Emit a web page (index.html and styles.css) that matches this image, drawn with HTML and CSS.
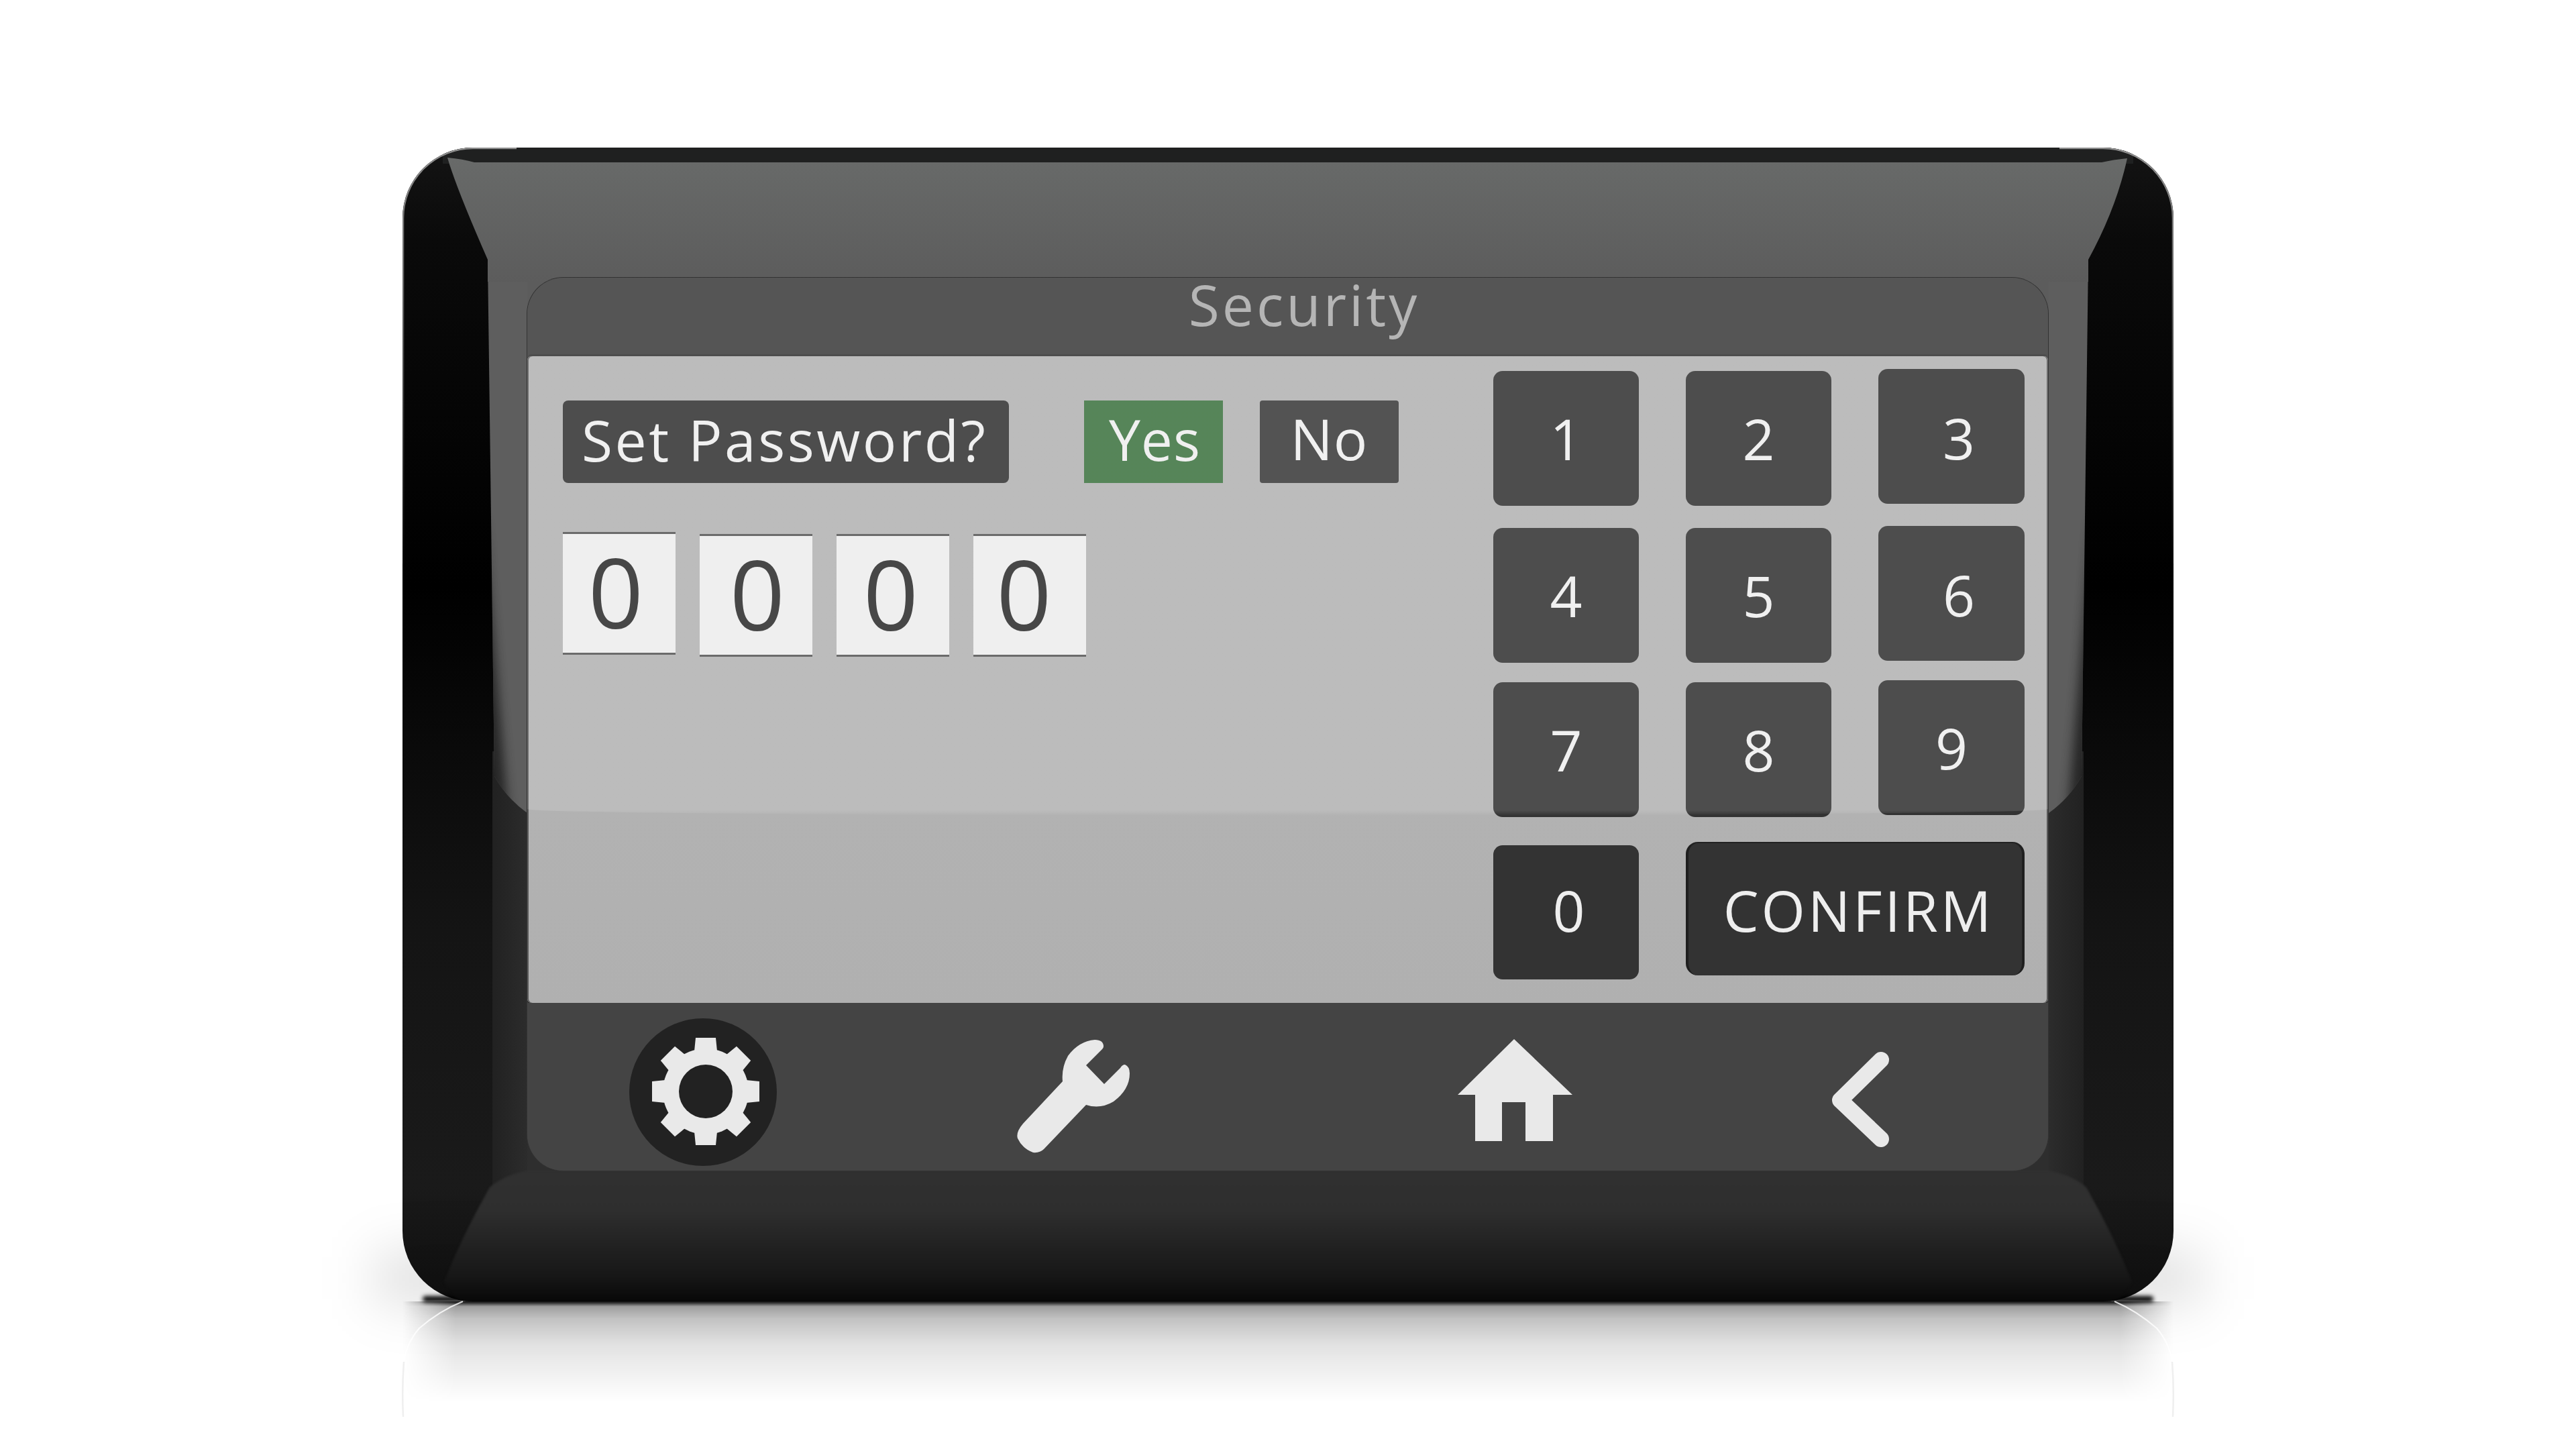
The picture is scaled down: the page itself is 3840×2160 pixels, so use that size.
FILE: index.html
```html
<!DOCTYPE html>
<html lang="en">
<head>
    <meta charset="UTF-8">
    <title>Security</title>
    <link rel="stylesheet" href="styles.css">
</head>
<body>
    <div class="device">
        <div class="floor-glow"></div>
        <div class="floor-shadow"></div>
        <div class="floor-contact"></div>
        <svg class="reflection" viewBox="0 0 2640 200">
            <path d="M90 0Q55 14 25 40Q6 62 2 90" class="reflection-line"/>
            <path d="M2 90Q-1 130 1 172" class="reflection-faint"/>
            <path d="M2552 0Q2585 14 2615 40Q2634 62 2638 90" class="reflection-line"/>
            <path d="M2638 90Q2641 130 2639 172" class="reflection-faint"/>
        </svg>

        <!-- Bezel faces -->
        <svg class="bezel" viewBox="0 0 2640 1720">
            <defs>
                <linearGradient id="topFace" x1="0" y1="0" x2="0" y2="1">
                    <stop offset="0" stop-color="#686a69"/>
                    <stop offset="1" stop-color="#5c5c5c"/>
                </linearGradient>
                <linearGradient id="lowLeft" x1="0" y1="0" x2="1" y2="0">
                    <stop offset="0" stop-color="#212121"/>
                    <stop offset="1" stop-color="#2c2c2c"/>
                </linearGradient>
                <linearGradient id="lowRight" x1="1" y1="0" x2="0" y2="0">
                    <stop offset="0" stop-color="#212121"/>
                    <stop offset="1" stop-color="#2c2c2c"/>
                </linearGradient>
                <linearGradient id="bottomFace" x1="0" y1="0" x2="0" y2="1">
                    <stop offset="0" stop-color="#303030"/>
                    <stop offset="0.3" stop-color="#2e2e2e"/>
                    <stop offset="0.8" stop-color="#171717"/>
                    <stop offset="1" stop-color="#080808"/>
                </linearGradient>
                <linearGradient id="edgeFade" gradientUnits="userSpaceOnUse" x1="0" y1="0" x2="0" y2="620">
                    <stop offset="0" stop-color="#909090"/>
                    <stop offset="1" stop-color="#0a0a0a"/>
                </linearGradient>
                <clipPath id="stripLeft">
                    <path d="M127 167L137 937Q155 970 186 992V167Z"/>
                </clipPath>
                <clipPath id="stripRight">
                    <path d="M2513 167L2503 937Q2485 970 2454 992V167Z"/>
                </clipPath>
            </defs>
            <rect x="60" y="0" width="2520" height="24" fill="#1f2020"/>
            <rect x="180" y="190" width="2280" height="80" fill="#5c5c5c"/>
            <rect x="180" y="1450" width="2280" height="80" fill="#2e2e2e"/>
            <path d="M134 900V1560H186V900Z" fill="url(#lowLeft)"/>
            <path d="M2506 900V1560H2454V900Z" fill="url(#lowRight)"/>
            <path d="M127 167L137 937Q155 970 186 992V167Z" fill="#5e5e5e"/>
            <path d="M2513 167L2503 937Q2485 970 2454 992V167Z" fill="#5e5e5e"/>
            <g clip-path="url(#stripLeft)">
                <path d="M120 540L158 1000H120Z" class="strip-fade"/>
            </g>
            <g clip-path="url(#stripRight)">
                <path d="M2520 540L2482 1000H2520Z" class="strip-fade"/>
            </g>
            <path d="M67 15Q90 17 107 22H2533Q2550 18 2571 16Q2555 90 2513 167V200H127V167Q80 60 67 15Z" fill="url(#topFace)"/>
            <path class="face-soft" d="M130 1550Q150 1532 186 1525H2454Q2490 1532 2510 1550Q2550 1620 2578 1690Q2565 1720 2545 1720H95Q75 1720 62 1690Q90 1620 130 1550Z" fill="url(#bottomFace)"/>
            <path d="M1 620V105A104 104 0 0 1 105 1H170" class="edge-light"/>
            <path d="M2639 620V105A104 104 0 0 0 2535 1H2470" class="edge-light"/>
        </svg>

        <div class="screen">
            <header class="title-bar">Security</header>

            <main class="panel">
                <section class="password-col">
                    <div class="question-row">
                        <div class="label">Set Password?</div>
                        <div class="choice choice-yes">Yes</div>
                        <div class="choice choice-no">No</div>
                    </div>
                    <div class="digit-row">
                        <div class="digit digit-a">0</div>
                        <div class="digit digit-b">0</div>
                        <div class="digit digit-c">0</div>
                        <div class="digit digit-d">0</div>
                    </div>
                </section>

                <section class="keypad">
                    <div class="key-row">
                        <div class="key">1</div>
                        <div class="key">2</div>
                        <div class="key key-high key-shift">3</div>
                    </div>
                    <div class="key-row row-two">
                        <div class="key">4</div>
                        <div class="key">5</div>
                        <div class="key key-high key-shift">6</div>
                    </div>
                    <div class="key-row row-three">
                        <div class="key">7</div>
                        <div class="key">8</div>
                        <div class="key key-high">9</div>
                    </div>
                    <div class="key-row row-four">
                        <div class="key key-zero">0</div>
                        <div class="key key-confirm">CONFIRM</div>
                    </div>
                </section>
            </main>

            <footer class="nav-bar">
                <svg class="nav-icon icon-gear" viewBox="0 0 220 220">
                    <circle cx="110" cy="110" r="110" fill="#222"/>
                    <g transform="translate(114 109)" class="icon-fill">
                        <circle r="64"/>
                        <polygon points="-17,-60 -15,-80 15,-80 17,-60"/>
                        <polygon points="-17,-60 -15,-80 15,-80 17,-60" transform="rotate(45)"/>
                        <polygon points="-17,-60 -15,-80 15,-80 17,-60" transform="rotate(90)"/>
                        <polygon points="-17,-60 -15,-80 15,-80 17,-60" transform="rotate(135)"/>
                        <polygon points="-17,-60 -15,-80 15,-80 17,-60" transform="rotate(180)"/>
                        <polygon points="-17,-60 -15,-80 15,-80 17,-60" transform="rotate(225)"/>
                        <polygon points="-17,-60 -15,-80 15,-80 17,-60" transform="rotate(270)"/>
                        <polygon points="-17,-60 -15,-80 15,-80 17,-60" transform="rotate(315)"/>
                        <circle r="40" fill="#222"/>
                    </g>
                </svg>
                <svg class="nav-icon icon-wrench" viewBox="1510 1518 180 220">
                    <path class="icon-fill" d="M1645 1560Q1645 1550 1632 1550Q1608 1552 1592 1574Q1582 1592 1584 1612L1525 1675Q1514 1688 1517 1697Q1524 1712 1540 1718Q1550 1719 1556 1713L1619 1647Q1640 1654 1660 1642Q1684 1624 1684 1600Q1684 1590 1677 1587Q1673 1587 1670 1592L1646 1616L1619 1588L1643 1564Q1645 1562 1645 1560Z"/>
                </svg>
                <svg class="nav-icon icon-home" viewBox="2170 1518 180 220">
                    <path class="icon-fill" d="M2257 1549L2344 1632H2315V1701H2274V1643H2239V1701H2199V1632H2173Z"/>
                </svg>
                <svg class="nav-icon icon-back" viewBox="2730 1518 90 220">
                    <path d="M2804 1580L2743 1640L2804 1698" fill="none" stroke="#e9e9e9" stroke-width="24" stroke-linecap="round" stroke-linejoin="round"/>
                </svg>
            </footer>

            <div class="gloss"></div>
        </div>
    </div>
</body>
</html>
```

FILE: styles.css
```css
* {
    box-sizing: border-box;
}
html, body {
    margin: 0;
    height: 2160px;
    overflow: hidden;
    background-color: #fff;
}
body {
    display: flex;
    justify-content: center;
    padding-top: 220px;
    font-family: "Open Sans", "Liberation Sans", sans-serif;
}

/* Device */
.device {
    position: relative;
    width: 2640px;
    height: 1720px;
    padding: 194px 187px 195px 186px;
    border-radius: 105px;
    background: linear-gradient(#141414 0, #0a0a0a 8%, #000 38%, #0a0a0a 52%, #141414 68%, #1a1a1a 90%, #101010 100%);
}
.bezel {
    position: absolute;
    top: 0;
    left: 0;
    width: 2640px;
    height: 1720px;
    border-radius: 105px;
}
.edge-light {
    fill: none;
    stroke: url(#edgeFade);
    stroke-width: 2.5;
}
.strip-fade {
    fill: #1c1c1c;
    opacity: 0.85;
    filter: blur(8px);
}
.face-soft {
    filter: blur(1.5px);
}

/* Floor under the device */
.floor-shadow {
    position: absolute;
    top: 100%;
    left: 0;
    right: 0;
    height: 150px;
    background: linear-gradient(rgba(0,0,0,0.8), rgba(0,0,0,0.34) 5%, rgba(0,0,0,0.21) 17%, rgba(0,0,0,0.11) 43%, rgba(0,0,0,0));
    -webkit-mask-image: linear-gradient(to right, transparent, #000 3%, #000 97%, transparent);
    mask-image: linear-gradient(to right, transparent, #000 3%, #000 97%, transparent);
}
.floor-glow {
    position: absolute;
    left: -40px;
    right: -40px;
    bottom: 0;
    height: 70px;
    background-color: rgba(0,0,0,0.14);
    filter: blur(40px);
}
.floor-contact {
    position: absolute;
    left: 30px;
    right: 30px;
    bottom: -1px;
    height: 9px;
    border-radius: 5px;
    background-color: #000;
    filter: blur(3px);
}
.reflection {
    position: absolute;
    top: 100%;
    left: 0;
    width: 2640px;
    height: 200px;
    overflow: visible;
}
.reflection-line {
    fill: none;
    stroke: #fff;
    stroke-width: 2;
    opacity: 0.8;
}
.reflection-faint {
    fill: none;
    stroke: #efefef;
    stroke-width: 2.5;
}

/* Screen */
.screen {
    position: relative;
    height: 1331px;
    border-radius: 54px;
    box-shadow: 0 0 0 1px #333;
    background-color: #444;
}
.gloss {
    position: absolute;
    top: 0;
    left: 0;
    right: 0;
    height: 802px;
    background: linear-gradient(rgba(255,255,255,0.13) 99%, rgba(255,255,255,0));
    border-radius: 54px 54px 50% 50% / 54px 54px 10px 10px;
}
.title-bar {
    display: flex;
    align-items: flex-start;
    justify-content: center;
    height: 117px;
    padding: 6px 0 0 49px;
    border-radius: 54px 54px 0 0;
    background-color: #3c3c3c;
    color: #aaa;
    font-size: 84px;
    letter-spacing: 4px;
    line-height: 67px;
}
.panel {
    display: flex;
    justify-content: space-between;
    align-items: flex-start;
    height: 964px;
    padding: 22px 35px 0 53px;
    border-radius: 6px;
    background: linear-gradient(#b2b2b2 70%, #b0b0b0 100%);
    box-shadow: 0 -3px 0 #333, 0 3px 0 #2c2c2c, inset 2px 0 0 #5a5a5a, inset -2px 0 0 #5a5a5a;
}

/* Question + entered digits */
.password-col {
    margin-top: 44px;
}
.question-row {
    display: flex;
}
.label, .choice {
    display: flex;
    align-items: center;
    height: 123px;
    color: #eee;
    font-size: 84px;
    line-height: 1;
}
.label {
    width: 665px;
    padding-bottom: 5px;
    padding-left: 28px;
    border-radius: 8px;
    background-color: #333;
    letter-spacing: 3.5px;
}
.choice {
    justify-content: center;
    width: 207px;
    letter-spacing: 1px;
}
.choice-yes {
    margin-left: 112px;
    padding: 0 0 8px 4px;
    background-color: #3d7340;
}
.choice-no {
    margin-left: 55px;
    padding-bottom: 10px;
    border-radius: 4px;
    background-color: #3a3a3a;
}
.digit-row {
    display: flex;
    align-items: flex-start;
    gap: 36px;
    margin-top: 73px;
}
.digit {
    display: flex;
    align-items: center;
    justify-content: center;
    width: 168px;
    height: 183px;
    padding-bottom: 8px;
    border-top: 3px solid #555;
    border-bottom: 3px solid #555;
    background-color: #ededed;
    color: #2c2c2c;
    font-size: 144px;
    line-height: 1;
}
.digit-a {
    padding-right: 10px;
}
.digit-b {
    margin-top: 3px;
    padding-left: 4px;
}
.digit-c {
    margin-top: 3px;
    padding-right: 6px;
}
.digit-d {
    margin-top: 3px;
    padding-right: 17px;
}

/* Keypad */
.keypad {
    width: 792px;
}
.key-row {
    display: grid;
    grid-template-columns: 217px 217px 218px;
    column-gap: 70px;
    align-items: start;
    height: 201px;
}
.row-two {
    margin-top: 33px;
}
.row-three {
    margin-top: 29px;
}
.row-four {
    margin-top: 42px;
    height: 200px;
}
.key {
    display: flex;
    align-items: center;
    justify-content: center;
    height: 201px;
    border-radius: 14px;
    background-color: #333;
    color: #eee;
    font-size: 84px;
    line-height: 1;
}
.key-high {
    margin-top: -3px;
}
.key-shift {
    padding: 4px 0 0 22px;
}
.key-zero {
    height: 200px;
    padding: 0 0 6px 8px;
}
.key-confirm {
    grid-column: 2 / 4;
    height: 199px;
    margin-top: -5px;
    padding: 2px 0 0 10px;
    border-left: 4px solid #1f1f1f;
    border-right: 4px solid #1f1f1f;
    border-top: 2px solid #222;
    border-radius: 18px;
    letter-spacing: 4px;
}

/* Bottom navigation */
.nav-bar {
    display: flex;
    align-items: flex-start;
    height: 250px;
    padding: 23px 0 0 152px;
    border-radius: 0 0 54px 54px;
    background-color: #444;
}
.nav-icon {
    flex: none;
    height: 220px;
}
.icon-fill {
    fill: #e9e9e9;
}
.icon-gear {
    width: 220px;
}
.icon-wrench {
    width: 180px;
    margin-left: 352px;
}
.icon-home {
    width: 180px;
    margin-left: 480px;
}
.icon-back {
    width: 90px;
    margin-left: 380px;
}
```
